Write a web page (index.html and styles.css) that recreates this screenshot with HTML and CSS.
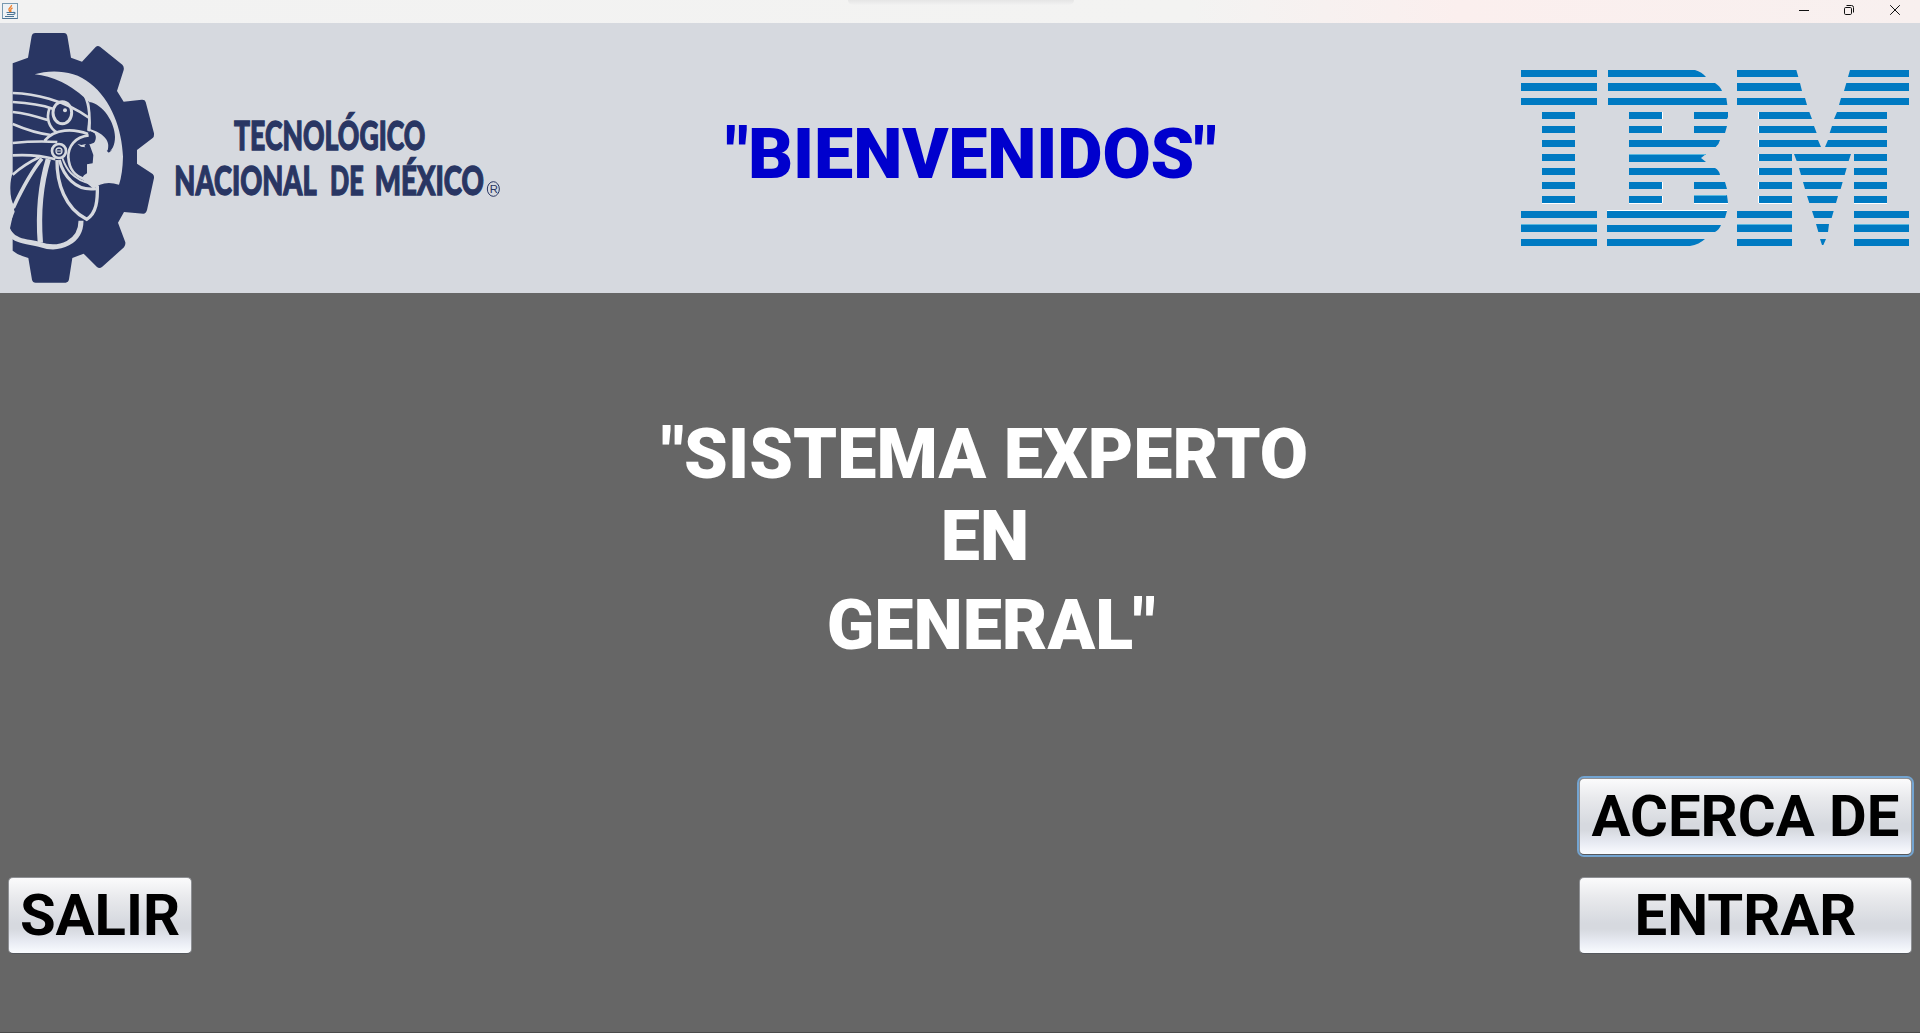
FILE: index.html
```
<!DOCTYPE html>
<html lang="es">
<head>
<meta charset="utf-8">
<title>Bienvenidos</title>
<link rel="stylesheet" href="styles.css">
</head>
<body>
<div class="titlebar">
  <svg class="java" width="16" height="16" viewBox="0 0 16 16">
    <rect x=".5" y=".5" width="15" height="15" fill="#eef2f5" stroke="#7899b0"/>
    <path d="M.5 15.5h15" stroke="#4c7595"/>
    <path d="M9.500 2C10 4 6 5 7 7l1 2M10.500 5C8 6 8.500 7 9 9" fill="none" stroke="#ee8130" stroke-width="1.400"/>
    <path d="M4.500 9.500h6.500M5 11.500h5.500M3 13.500h9M11 9.500q3-.5 1.500 1.500l-2 .8" fill="none" stroke="#4c7595" stroke-width="1.200"/>
  </svg>
  <div class="handle"></div>
  <svg class="controls" width="160" height="23" viewBox="0 0 160 23" fill="none" stroke="#111">
    <path d="M39 10.500h10"/>
    <rect x="84.500" y="7.500" width="7" height="7" rx="1.200"/>
    <path d="M86.500 5.500h5q2 0 2 2v5"/>
    <path d="M130.200 5.200l9.600 9.600M139.800 5.200l-9.600 9.600"/>
  </svg>
</div>
<header class="banner">
  <svg class="tecnm" width="520" height="270" viewBox="0 9 1560 810">
    <path fill="#293663" d="M38 130L84 113L95 48Q97 39 106 39H192Q200 39 202 48L213 113L246 125L287 81Q293 75 300 80L367 134Q373 140 371 150L351 213L371 245L425 239Q435 238 437 246L462 340Q463 350 458 354L411 390V431L458 462Q463 467 462 474L441 570Q438 581 430 581L372 576L354 608L376 667Q377 676 372 682L306 741Q298 747 291 741L251 701L217 714L207 778Q205 788 197 788H107Q98 788 96 779L85 714Q55 706 38 692V640L30 625L44 560Q30 540 31 500Q32 475 38 460Z"/>
    <g fill="#d6d9df">
      <path d="M104 163C150 148 225 150 270 190C335 240 366 330 369 410Q368 460 357 494Q325 484 300 494L280 506L245 476L252 466L261 460V433L278 430L280 405L268 372L284 364Q288 350 284 340L262 330L268 246L252 232Q185 172 104 163Z"/>
      <path d="M38 555L30 540V610L44 575Z"/>
      <circle cx="195" cy="271" r="6"/>
      <path d="M232 371l12 4 14-3-5 6 3 4-13-2z"/>
    </g>
    <path fill="#293663" d="M268 246C310 252 345 310 345 350C345 375 336 393 323 396Q321 393 324 387C331 360 305 338 272 328Z"/>
    <path fill="#293663" d="M264 334Q275 333 286 344Q290 358 282 368L270 373L250 350Z"/>
    <path fill="#293663" d="M320 390q8 6 14 0v2l-8 6z"/>
    <g fill="none" stroke="#d6d9df" stroke-width="8">
      <path d="M38 219C100 221 190 238 268 294M38 246C90 249 130 256 158 266M38 276C80 280 115 291 145 301M38 312C80 330 110 340 152 345M148 266C138 295 147 325 172 338M134 362C165 325 220 325 264 342M255 228C268 255 272 300 266 334M38 369Q110 362 172 366M38 406Q110 402 166 418M118 412Q75 432 38 464"/>
      <ellipse cx="187" cy="278" rx="28" ry="33" stroke-width="9"/>
      <circle cx="177" cy="393" r="21"/>
      <circle cx="177" cy="393" r="9" stroke-width="4"/>
      <path d="M171 393h12" stroke-width="3"/>
      <path d="M266 346C225 350 204 380 205 412C207 445 225 470 256 478"/>
      <path d="M126 416C90 460 60 520 40 563" stroke-width="11"/>
      <path d="M145 417C120 500 115 590 121 668" stroke-width="16"/>
      <path d="M171 420C170 490 195 565 260 598C290 580 293 540 292 498" stroke-width="10"/>
      <path d="M178 420C190 465 225 515 288 506" stroke-width="9"/>
      <path d="M187 414C198 445 215 478 275 492" stroke-width="6"/>
      <path d="M28 638C50 668 90 664 118 673C180 695 243 665 243 602" stroke-width="15"/>
    </g>
    <g class="wordmark">
      <text x="702" y="389" textLength="574" lengthAdjust="spacingAndGlyphs">TECNOLÓGICO</text>
      <text x="523" y="525" textLength="427" lengthAdjust="spacingAndGlyphs">NACIONAL</text>
      <text x="990" y="525" textLength="101" lengthAdjust="spacingAndGlyphs">DE</text>
      <text x="1124" y="525" textLength="328" lengthAdjust="spacingAndGlyphs">MÉXICO</text>
    </g>
    <ellipse cx="1480" cy="507" rx="18" ry="22" fill="none" stroke="#293663" stroke-width="3"/>
    <text class="reg" x="1469" y="519">R</text>
  </svg>
  <h1 class="welcome">"BIENVENIDOS"</h1>
  <svg class="ibm" width="420" height="220" viewBox="0 0 1260 660" fill="#007ac2">
    <path d="M63 60h228v21h-228zM63 99h228v24h-228zM63 144h228v21h-228zM126 186h99v21h-99zM126 228h99v21h-99zM126 270h99v21h-99zM126 312h99v21h-99zM126 354h99v21h-99zM126 396h99v21h-99zM126 438h99v21h-99zM63 483h228v21h-228zM63 522h228v24h-228zM63 567h228v21h-228z"/>
    <path d="M324 60H585Q606 66 618 81H324zM324 99H645Q660 108 666 123H324zM324 144H679L682 165H324zM387 186h99v21h-99zM582 186h102v15l-3 6h-99zM387 228h99v21h-99zM582 228h99l-6 21h-93zM387 270H660Q657 283 647 291H387zM387 312H618L603 324L618 336H387zM387 354H645Q658 361 660 375H387zM387 396h99v21h-99zM582 396h93l6 21h-99zM387 438h99v21h-99zM582 436h99l3 23h-102zM321 483H681L675 504H321zM321 525H663Q657 540 645 546H321zM321 567H615Q598 583 570 588H321z"/>
    <path d="M711 60H889L895 81H711zM711 99H900L906 123H711zM711 144H915L921 165H711zM777 186H928L936 207H777zM777 228H942L950 249H777zM777 270H954L963 291H777zM777 312h99v21h-99zM777 354h99v21h-99zM777 396h99v21h-99zM777 438h99v21h-99zM711 483h165v21h-165zM711 522h165v24h-165zM711 567h165v21h-165z"/>
    <path d="M1227 60H1050L1044 81H1227zM1227 99H1039L1032 123H1227zM1227 144H1023L1017 165H1227zM1161 186H1011L1002 207H1161zM1161 228H996L989 249H1161zM1161 270H984L975 291H1161zM1062 312h99v21h-99zM1062 354h99v21h-99zM1062 396h99v21h-99zM1062 438h99v21h-99zM1062 483h165v21h-165zM1062 522h165v24h-165zM1062 567h165v21h-165z"/>
    <path d="M882 312H1053L1046 333H890zM897 354H1040L1034 375H903zM909 396H1028L1022 417H915zM921 438H1014L1008 459H928zM936 483H1001L995 504H943zM948 522H987L984 546H955zM960 567H978L970 585H966z"/>
    <path fill="#58b7de" d="M63 522h228v3h-228zM711 522h165v3h-165zM1062 522h165v3h-165zM387 312h231v3h-231zM582 435h96v3h-96z"/>
    <path fill="#fff" d="M321 480h360v3h-360zM126 459h99v3h-99zM387 459h99v3h-99zM582 459h102v3h-102zM777 459h99v3h-99zM1062 459h99v3h-99zM486 186h3v21h-3zM486 228h3v21h-3zM486 396h3v21h-3zM486 438h3v21h-3zM774 186h3v21h-3zM774 228h3v21h-3zM774 270h3v21h-3zM774 312h3v21h-3zM774 354h3v21h-3zM774 396h3v21h-3zM774 438h3v21h-3z"/>
  </svg>
</header>
<main class="content">
  <div class="headline">
    <p class="first">"SISTEMA EXPERTO</p>
    <p>EN</p>
    <p class="last">GENERAL"</p>
  </div>
  <div class="actions">
    <button class="btn salir">SALIR</button>
    <div class="stack">
      <button class="btn focused">ACERCA DE</button>
      <button class="btn">ENTRAR</button>
    </div>
  </div>
</main>
</body>
</html>
```
FILE: styles.css
```
* { box-sizing: border-box; }
body {
  margin: 0;
  height: 1033px;
  overflow: hidden;
  display: flex;
  flex-direction: column;
  font-family: Roboto, "Liberation Sans", sans-serif;
  background: #666;
}
.titlebar {
  height: 23px;
  flex: none;
  display: flex;
  justify-content: space-between;
  background: linear-gradient(90deg, #f2f2f2 0%, #f3f3f2 62%, #fbefee 76%, #f8f0ef 100%);
}
.java { margin: 3px 0 0 2px; }
.handle {
  width: 226px;
  height: 5px;
  margin-left: 144px;
  background: linear-gradient(#e5e5e5, #f2f2f2);
  border-radius: 0 0 8px 8px;
}
.banner {
  height: 270px;
  flex: none;
  display: grid;
  grid-template-columns: 520px 1fr 420px;
  background: #d6d9df;
}
.wordmark {
  font: 900 122px Lato, sans-serif;
  fill: #293663;
  stroke: #293663;
  stroke-width: 4px;
}
.reg { font: 34px "Liberation Sans", sans-serif; fill: #293663; }
.welcome {
  margin: 90px 0 0 206px;
  font-size: 70px;
  font-weight: 900;
  line-height: 82px;
  letter-spacing: -0.15px;
  color: #0000cd;
  white-space: nowrap;
}
.ibm { margin-top: 27px; }
.content {
  flex: 1;
  display: flex;
  flex-direction: column;
  justify-content: space-between;
  padding: 120px 8px 78px;
  border-bottom: 1px solid #4a4a4a;
}
.headline {
  padding-left: 50px;
  text-align: center;
  color: #fff;
  font-size: 70px;
  font-weight: 900;
  line-height: 82px;
}
.headline p { margin: 0; }
.headline .first { letter-spacing: 0.05px; }
.headline .last { padding: 7px 0 0 12px; }
.actions {
  display: flex;
  justify-content: space-between;
  align-items: flex-end;
}
.stack {
  display: flex;
  flex-direction: column;
  gap: 22px;
  width: 333px;
}
.btn {
  height: 77px;
  padding: 0 0 2px;
  border: 1px solid #8e9094;
  border-bottom-color: #55585d;
  border-radius: 5px;
  background: linear-gradient(#fbfbfc 0%, #e9eaed 25%, #d6d9df 60%, #d6d9df 68%, #e8ebf3 85%, #fafcff 100%);
  font: 700 58px/70px Roboto, sans-serif;
  color: #000;
  white-space: nowrap;
}
.salir { width: 184px; }
.focused {
  box-shadow: 0 0 0 2px #73a4d1;
}
```
